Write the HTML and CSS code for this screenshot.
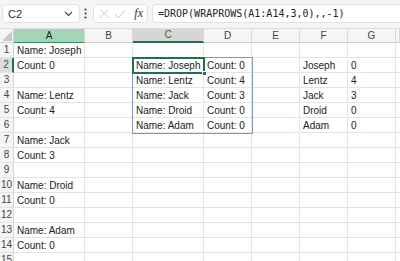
FILE: index.html
```html
<!DOCTYPE html>
<html lang="en">
<head>
  <meta charset="UTF-8">
  <title>DROP WRAPROWS</title>
  <link rel="stylesheet" href="styles.css">
</head>
<body>

  <div class="bar">
    <div class="namebox">
      <span>C2</span>
      <svg width="9" height="6" viewBox="0 0 9 6"><path d="M1 1 L4.5 4.5 L8 1" fill="none" stroke="#444" stroke-width="1.1"/></svg>
    </div>
    <svg class="dots" width="3" height="11" viewBox="0 0 3 11"><circle cx="1.5" cy="1.5" r="1.1" fill="#444"/><circle cx="1.5" cy="5.5" r="1.1" fill="#444"/><circle cx="1.5" cy="9.5" r="1.1" fill="#444"/></svg>
    <div class="fxbox">
      <svg width="11" height="11" viewBox="0 0 11 11"><path d="M1 1 L10 10 M10 1 L1 10" stroke="#c4c4c4" stroke-width="1"/></svg>
      <svg width="13" height="10" viewBox="0 0 13 10"><path d="M1 5 L4.5 9 L12 1" fill="none" stroke="#c4c4c4" stroke-width="1"/></svg>
      <span class="fx">fx</span>
    </div>
    <div class="formula">=DROP(WRAPROWS(A1:A14,3,0),,-1)</div>
  </div>

  <div class="sheet">
    <div class="corner"><svg width="10" height="10" viewBox="0 0 10 10"><path d="M10 0 L10 10 L0 10 Z" fill="#c8c8c8"/></svg></div>
    <div class="ch ch-ref">A</div>
    <div class="ch">B</div>
    <div class="ch ch-sel">C</div>
    <div class="ch">D</div>
    <div class="ch">E</div>
    <div class="ch">F</div>
    <div class="ch">G</div>
    <div class="ch"></div>

    <div class="rh">1</div><div class="c">Name: Joseph</div><div class="c"></div><div class="c"></div><div class="c"></div><div class="c"></div><div class="c"></div><div class="c"></div><div class="c"></div>
    <div class="rh rh-sel">2</div><div class="c">Count: 0</div><div class="c"></div><div class="c">Name: Joseph</div><div class="c">Count: 0</div><div class="c"></div><div class="c">Joseph</div><div class="c">0</div><div class="c"></div>
    <div class="rh">3</div><div class="c"></div><div class="c"></div><div class="c">Name: Lentz</div><div class="c">Count: 4</div><div class="c"></div><div class="c">Lentz</div><div class="c">4</div><div class="c"></div>
    <div class="rh">4</div><div class="c">Name: Lentz</div><div class="c"></div><div class="c">Name: Jack</div><div class="c">Count: 3</div><div class="c"></div><div class="c">Jack</div><div class="c">3</div><div class="c"></div>
    <div class="rh">5</div><div class="c">Count: 4</div><div class="c"></div><div class="c">Name: Droid</div><div class="c">Count: 0</div><div class="c"></div><div class="c">Droid</div><div class="c">0</div><div class="c"></div>
    <div class="rh">6</div><div class="c"></div><div class="c"></div><div class="c">Name: Adam</div><div class="c">Count: 0</div><div class="c"></div><div class="c">Adam</div><div class="c">0</div><div class="c"></div>
    <div class="rh">7</div><div class="c">Name: Jack</div><div class="c"></div><div class="c"></div><div class="c"></div><div class="c"></div><div class="c"></div><div class="c"></div><div class="c"></div>
    <div class="rh">8</div><div class="c">Count: 3</div><div class="c"></div><div class="c"></div><div class="c"></div><div class="c"></div><div class="c"></div><div class="c"></div><div class="c"></div>
    <div class="rh">9</div><div class="c"></div><div class="c"></div><div class="c"></div><div class="c"></div><div class="c"></div><div class="c"></div><div class="c"></div><div class="c"></div>
    <div class="rh">10</div><div class="c">Name: Droid</div><div class="c"></div><div class="c"></div><div class="c"></div><div class="c"></div><div class="c"></div><div class="c"></div><div class="c"></div>
    <div class="rh">11</div><div class="c">Count: 0</div><div class="c"></div><div class="c"></div><div class="c"></div><div class="c"></div><div class="c"></div><div class="c"></div><div class="c"></div>
    <div class="rh">12</div><div class="c"></div><div class="c"></div><div class="c"></div><div class="c"></div><div class="c"></div><div class="c"></div><div class="c"></div><div class="c"></div>
    <div class="rh">13</div><div class="c">Name: Adam</div><div class="c"></div><div class="c"></div><div class="c"></div><div class="c"></div><div class="c"></div><div class="c"></div><div class="c"></div>
    <div class="rh">14</div><div class="c">Count: 0</div><div class="c"></div><div class="c"></div><div class="c"></div><div class="c"></div><div class="c"></div><div class="c"></div><div class="c"></div>
    <div class="rh">15</div><div class="c"></div><div class="c"></div><div class="c"></div><div class="c"></div><div class="c"></div><div class="c"></div><div class="c"></div><div class="c"></div>

    <!-- spill range C2:D6 and active cell C2 -->
    <div class="spill"></div>
    <div class="active"><div class="handle"></div></div>
  </div>

</body>
</html>
```

FILE: styles.css
```css
* {
  box-sizing: border-box;
}
body {
  margin: 0;
  width: 400px;
  height: 261px;
  overflow: hidden;
  background: #ffffff;
  font-family: "Liberation Sans", Arial, sans-serif;
  color: #222;
}
.bar {
  height: 29px;
  background: #f5f5f5;
  border-bottom: 1px solid #dcdcdc;
  display: flex;
  align-items: center;
  padding: 0 0 1px 2px;
}
.namebox {
  width: 78px;
  height: 19px;
  background: #fff;
  border: 1px solid #e2e2e2;
  border-radius: 4px;
  display: flex;
  align-items: center;
  justify-content: space-between;
  padding: 0 6px 0 5px;
  font-size: 11px;
  color: #333;
}
.dots {
  margin: 0 6px 0 4px;
}
.fxbox {
  width: 55px;
  height: 19px;
  background: #fff;
  border: 1px solid #e2e2e2;
  border-radius: 4px;
  display: flex;
  align-items: center;
  gap: 5px;
  padding: 0 4px 0 5px;
}
.fx {
  font-family: "Liberation Serif", serif;
  font-style: italic;
  font-size: 12px;
  color: #333;
  margin-left: 3px;
}
.formula {
  flex: 1;
  height: 19px;
  margin-left: 4px;
  background: #fff;
  border: 1px solid #e2e2e2;
  border-right: none;
  border-radius: 4px 0 0 4px;
  padding: 0 5px;
  font-family: "DejaVu Sans Mono", "Liberation Mono", monospace;
  font-size: 10px;
  line-height: 17px;
  color: #222;
  white-space: nowrap;
}
.sheet {
  position: relative;
  display: grid;
  grid-template-columns: 14px 71px 48px 71px 48px 48px 48px 48px 4px;
  grid-template-rows: 14px;
  grid-auto-rows: 15px;
}
.corner {
  background: #f5f5f5;
  border-right: 1px solid #d4d4d4;
  border-bottom: 1px solid #d4d4d4;
  display: flex;
  align-items: flex-end;
  justify-content: flex-end;
  padding: 0 1px 1px 0;
}
.ch {
  background: #f5f5f5;
  border-right: 1px solid #dadada;
  border-bottom: 1px solid #cfcfcf;
  font-size: 10px;
  line-height: 13px;
  text-align: center;
  color: #444;
}
.ch-ref {
  background: #a3d6b8;
  border-bottom: 1px solid #3c8a5e;
  color: #222;
}
.ch-sel {
  background: #d6d6d6;
  border-bottom: 2px solid #217346;
  color: #1e6b40;
  line-height: 12px;
}
.rh {
  background: #f5f5f5;
  border-right: 1px solid #d4d4d4;
  border-bottom: 1px solid #e4e4e4;
  font-size: 10px;
  line-height: 14px;
  text-align: center;
  color: #444;
}
.rh-sel {
  background: #dedede;
  border-right: 2px solid #217346;
  color: #1e6b40;
}
.c {
  border-right: 1px solid #e4e4e4;
  border-bottom: 1px solid #e4e4e4;
  padding: 0 3px;
  font-size: 10px;
  line-height: 15px;
  white-space: nowrap;
  overflow: hidden;
  color: #222;
}
.spill {
  position: absolute;
  left: 132px;
  top: 28px;
  width: 121px;
  height: 77px;
  border: 1px solid #6f9ae0;
}
.active {
  position: absolute;
  left: 132px;
  top: 28px;
  width: 73px;
  height: 17px;
  border: 2px solid #217346;
}
.handle {
  position: absolute;
  right: -4px;
  bottom: -4px;
  width: 5px;
  height: 5px;
  background: #217346;
  border: 1px solid #fff;
}
```
